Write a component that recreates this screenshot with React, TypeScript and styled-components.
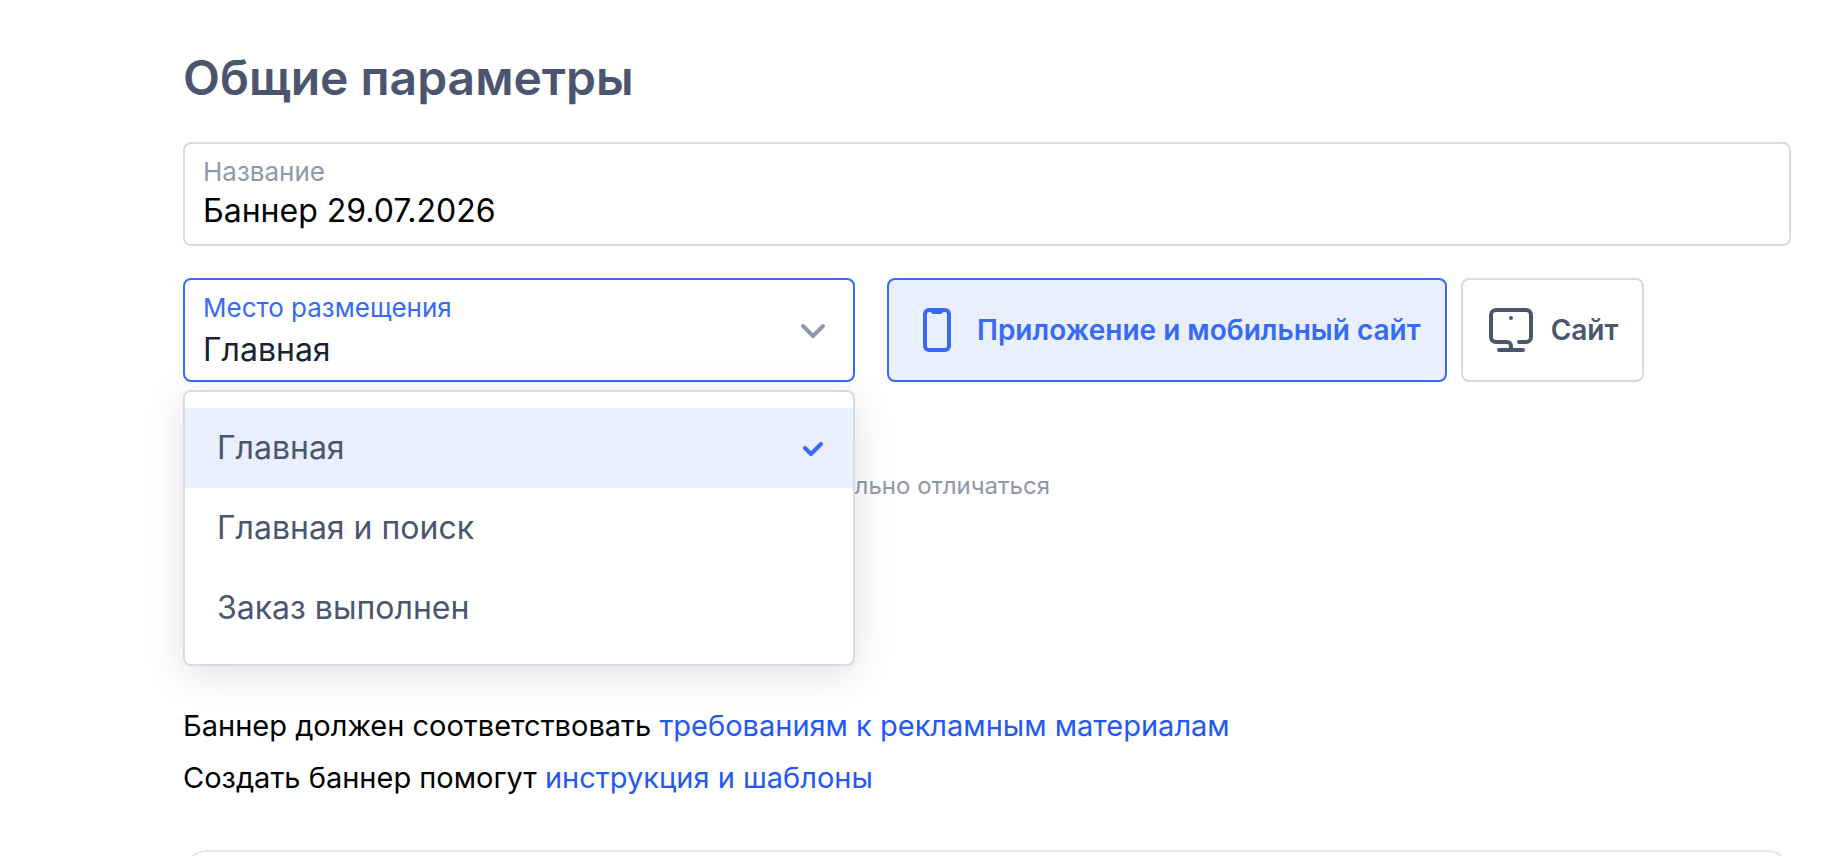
import React, { useState } from "react";
import styled, { createGlobalStyle } from "styled-components";

const color = {
  text: "#4b566e",
  muted: "#9197a8",
  border: "#d5dae4",
  accent: "#366af7",
  accentSoft: "#e9effc",
  link: "#2458f5",
};

const GlobalStyle = createGlobalStyle`
  * { box-sizing: border-box; }
  body { margin: 0; background: #fff; font-family: Inter, "Liberation Sans", sans-serif; }
  button, input, select { font-family: inherit; }
`;

const Page = styled.main`
  display: flex;
  flex-direction: column;
  height: 100vh;
  overflow-y: auto;
  scrollbar-width: none;
  padding: 46px 47px 0 183px;
`;

const Title = styled.h1`
  flex: none;
  margin: 0 0 32px;
  font-size: 48px;
  line-height: 64px;
  font-weight: 600;
  color: ${color.text};
`;

const Field = styled.div<{ $active?: boolean }>`
  position: relative;
  flex: none;
  display: flex;
  flex-direction: column;
  height: 104px;
  padding: 12px 18px 6px;
  border: 2px solid ${(p) => (p.$active ? color.accent : color.border)};
  border-radius: 8px;
  background: #fff;
`;

const Label = styled.label<{ $active?: boolean }>`
  font-size: 26px;
  line-height: 32px;
  color: ${(p) => (p.$active ? color.accent : color.muted)};
`;

const TextInput = styled.input`
  height: 44px;
  padding: 0;
  border: 0;
  outline: 0;
  background: transparent;
  font-size: 32px;
  color: #000;
`;

const Select = styled.select`
  height: 50px;
  padding: 0;
  border: 0;
  outline: 0;
  appearance: none;
  background: transparent;
  font-size: 32px;
  color: #1a2233;
`;

const Chevron = styled.svg`
  position: absolute;
  right: 26px;
  top: 36px;
  pointer-events: none;
`;

const PlacementRow = styled.div`
  flex: none;
  display: flex;
  gap: 32px;
  margin-top: 32px;
`;

const SelectBox = styled.div`
  position: relative;
  flex: 0 1 672px;
`;

const Menu = styled.ul`
  position: absolute;
  z-index: 1;
  top: 112px;
  left: 0;
  right: 0;
  margin: 0;
  padding: 16px 0;
  list-style: none;
  border: 2px solid ${color.border};
  border-radius: 8px;
  background: #fff;
  box-shadow: 0 8px 40px rgba(0, 0, 0, 0.12);
`;

const MenuItem = styled.button<{ $selected: boolean }>`
  display: flex;
  align-items: center;
  justify-content: space-between;
  width: 100%;
  height: 80px;
  padding: 0 28px 2px 32px;
  border: 0;
  background: ${(p) => (p.$selected ? color.accentSoft : "#fff")};
  font-size: 32px;
  color: ${color.text};
  cursor: pointer;
`;

const Platforms = styled.div`
  display: flex;
  gap: 14px;
`;

const PlatformButton = styled.button<{ $active: boolean }>`
  display: flex;
  align-items: center;
  gap: 16px;
  height: 104px;
  padding: 0 24px;
  border: 2px solid ${(p) => (p.$active ? color.accent : color.border)};
  border-radius: 8px;
  background: ${(p) => (p.$active ? color.accentSoft : "#fff")};
  color: ${(p) => (p.$active ? color.accent : color.text)};
  font-size: 28px;
  font-weight: 600;
  white-space: nowrap;
  cursor: pointer;

  svg { flex: none; }
`;

const Hint = styled.p`
  flex: none;
  margin: 88px 0 0;
  font-size: 24px;
  line-height: 32px;
  color: ${color.muted};
`;

const Notes = styled.div`
  flex: none;
  margin: 198px 0 46px;
  font-size: 29px;
  line-height: 52px;
  color: #000;
`;

const Note = styled.p`
  margin: 0;
`;

const Link = styled.a`
  color: ${color.link};
  text-decoration: none;
`;

const Card = styled.section`
  flex: none;
  height: 240px;
  border: 2px solid #e2e7ed;
  border-radius: 24px;
`;

const PhoneIcon = () => (
  <svg width="48" height="48" viewBox="0 0 48 48" fill="none" aria-hidden="true">
    <rect x="12" y="4" width="24" height="40" rx="4" stroke="currentColor" strokeWidth="4" />
    <path d="M17 4h14v2c-2 0-1 2-4 2h-6c-3 0-2-2-4-2z" fill="currentColor" />
  </svg>
);

const MonitorIcon = () => (
  <svg width="48" height="48" viewBox="0 0 48 48" fill="none" aria-hidden="true">
    <g stroke="currentColor" strokeWidth="4" strokeLinecap="round">
      <path d="M32 36h7a5 5 0 0 0 5-5V9a5 5 0 0 0-5-5H9a5 5 0 0 0-5 5v22a5 5 0 0 0 5 5h11a4 4 0 0 1 4 4v3" />
      <path d="M12 44h24" />
    </g>
    <circle cx="24" cy="12" r="2" fill="currentColor" />
  </svg>
);

const CheckIcon = () => (
  <svg width="24" height="24" viewBox="0 0 24 24" fill="none" aria-hidden="true">
    <path d="M4 13l6 6 10-10" stroke={color.accent} strokeWidth="4" strokeLinecap="round" strokeLinejoin="round" />
  </svg>
);

const placements = ["Главная", "Главная и поиск", "Заказ выполнен"];

export default function App() {
  const [name, setName] = useState("Баннер 29.07.2026");
  const [placement, setPlacement] = useState(placements[0]);
  const [open, setOpen] = useState(true);
  const [platform, setPlatform] = useState("mobile");

  return (
    <Page>
      <GlobalStyle />
      <Title>Общие параметры</Title>
      <Field>
        <Label htmlFor="name">Название</Label>
        <TextInput id="name" value={name} onChange={(e) => setName(e.target.value)} />
      </Field>
      <PlacementRow>
        <SelectBox>
          <Field $active={open}>
            <Label htmlFor="placement" $active={open}>Место размещения</Label>
            <Select
              id="placement"
              value={placement}
              onChange={(e) => setPlacement(e.target.value)}
              onMouseDown={(e) => {
                e.preventDefault();
                setOpen(!open);
              }}
            >
              {placements.map((item) => (
                <option key={item}>{item}</option>
              ))}
            </Select>
            <Chevron width="28" height="28" viewBox="0 0 28 28" fill="none" aria-hidden="true">
              <path d="M4 10l10 10 10-10" stroke={color.muted} strokeWidth="4" strokeLinecap="round" strokeLinejoin="round" />
            </Chevron>
          </Field>
          {open && (
            <Menu>
              {placements.map((item) => (
                <li key={item}>
                  <MenuItem
                    type="button"
                    $selected={item === placement}
                    onClick={() => {
                      setPlacement(item);
                      setOpen(false);
                    }}
                  >
                    {item}
                    {item === placement && <CheckIcon />}
                  </MenuItem>
                </li>
              ))}
            </Menu>
          )}
        </SelectBox>
        <Platforms>
          <PlatformButton type="button" $active={platform === "mobile"} onClick={() => setPlatform("mobile")}>
            <PhoneIcon />
            Приложение и мобильный сайт
          </PlatformButton>
          <PlatformButton type="button" $active={platform === "site"} onClick={() => setPlatform("site")}>
            <MonitorIcon />
            Сайт
          </PlatformButton>
        </Platforms>
      </PlacementRow>
      <Hint>На реальных устройствах вид баннера может незначительно отличаться</Hint>
      <Notes>
        <Note>
          Баннер должен соответствовать <Link href="#requirements">требованиям к рекламным материалам</Link>
        </Note>
        <Note>
          Создать баннер помогут <Link href="#templates">инструкция и шаблоны</Link>
        </Note>
      </Notes>
      <Card aria-label="Баннер" />
    </Page>
  );
}
